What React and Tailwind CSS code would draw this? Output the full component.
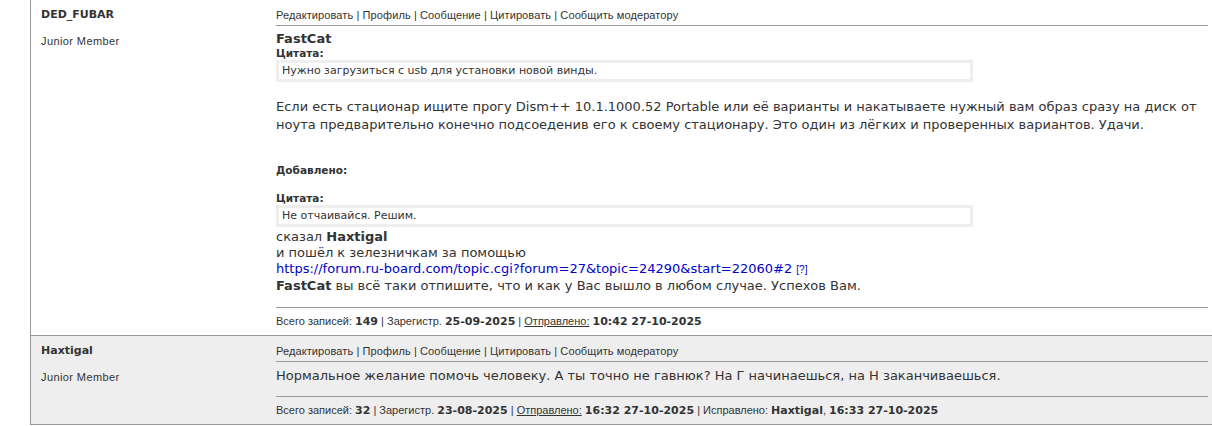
import React from 'react';

const tahoma = "font-['Tahoma','Liberation_Sans',sans-serif]";
const verdana = "font-['Verdana','DejaVu_Sans',sans-serif]";

const Links = () => (
  <div className={`${tahoma} text-[11px] tracking-[0.1px] text-[#333] leading-[14px] pt-[8px] pb-[3px] border-b border-[#999]`}>
    Редактировать | Профиль | Сообщение | Цитировать | Сообщить модератору
  </div>
);

const Quote = ({ children }) => (
  <div>
    <div className={`${verdana} text-[10.5px] font-bold text-[#333] leading-[13px]`}>Цитата:</div>
    <div className={`${verdana} text-[11px] text-[#333] w-[697px] border-[3px] border-[#eee] bg-white px-[3px] py-[1px] leading-[14px]`}>
      {children}
    </div>
  </div>
);

const Footer = ({ children }) => (
  <div className={`${tahoma} text-[11px] text-[#333] border-t border-[#999] pt-[6px] pb-[6px] leading-[14px]`}>
    {children}
  </div>
);

const B = ({ children }) => (
  <b className={`${verdana} font-bold`}>{children}</b>
);

const Post = ({ name, bg, children, footer }) => (
  <div className={`grid grid-cols-[245px_1fr] ${bg}`}>
    <div className="pl-[10px] pt-[8px]">
      <div className={`${verdana} text-[11px] font-bold text-[#333] leading-[14px]`}>{name}</div>
      <div className={`${tahoma} text-[11px] tracking-[0.4px] text-[#333] mt-[12px] leading-[14px]`}>Junior Member</div>
    </div>
    <div className="pr-[4px] flex flex-col">
      <Links />
      <div className="flex-1">{children}</div>
      <Footer>{footer}</Footer>
    </div>
  </div>
);

export default function App() {
  return (
    <div className="w-[1212px] h-[426px] bg-white overflow-hidden">
      <div className="ml-[30px] border-l border-b border-[#999]">
        <Post
          name="DED_FUBAR"
          bg="bg-white"
          footer={
            <>
              Всего записей: <B>149</B> | Зарегистр. <B>25-09-2025</B> | <span className="underline">Отправлено:</span> <B>10:42 27-10-2025</B>
            </>
          }
        >
          <div className="pt-[5px] pb-[13px]">
            <div className={`${verdana} text-[13px] font-bold text-[#333] leading-[16px]`}>FastCat</div>
            <Quote>Нужно загрузиться с usb для установки новой винды.</Quote>
            <div className={`${verdana} text-[13px] text-[#333] leading-[18px] mt-[16px] w-[930px]`}>
              Если есть стационар ищите прогу Dism++ 10.1.1000.52 Portable или её варианты и накатываете нужный вам образ сразу на диск от ноута предварительно конечно подсоеденив его к своему стационару. Это один из лёгких и проверенных вариантов. Удачи.
            </div>
            <div className={`${verdana} text-[10.5px] font-bold text-[#333] leading-[14px] mt-[29px]`}>Добавлено:</div>
            <div className="mt-[15px]">
              <Quote>Не отчаивайся. Решим.</Quote>
            </div>
            <div className={`${verdana} text-[13px] text-[#333] leading-[16px] mt-[2px]`}>
              <div>сказал <b>Haxtigal</b></div>
              <div>и пошёл к зелезничкам за помощью</div>
              <div>
                <span className="text-[#0000cc]">https://forum.ru-board.com/topic.cgi?forum=27&amp;topic=24290&amp;start=22060#2</span>{' '}
                <span className={`${tahoma} text-[10px] text-[#0000cc]`}>[?]</span>
              </div>
              <div><b>FastCat</b> вы всё таки отпишите, что и как у Вас вышло в любом случае. Успехов Вам.</div>
            </div>
          </div>
        </Post>
        <div className="border-t border-[#999]">
          <Post
            name="Haxtigal"
            bg="bg-[#eeeeee]"
            footer={
              <>
                Всего записей: <B>32</B> | Зарегистр. <B>23-08-2025</B> | <span className="underline">Отправлено:</span> <B>16:32 27-10-2025</B> | Исправлено: <B>Haxtigal</B>, <B>16:33 27-10-2025</B>
              </>
            }
          >
            <div className={`${verdana} text-[13px] text-[#333] leading-[18px] pt-[5px] pb-[11px]`}>
              Нормальное желание помочь человеку. А ты точно не гавнюк? На Г начинаешься, на Н заканчиваешься.
            </div>
          </Post>
        </div>
      </div>
    </div>
  );
}
